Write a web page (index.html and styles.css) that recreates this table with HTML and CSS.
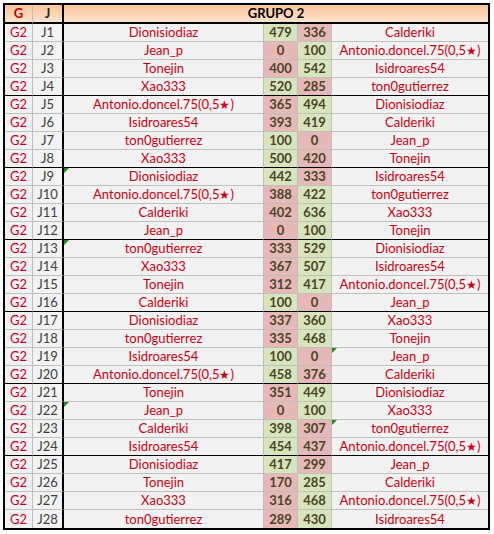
FILE: index.html
```html
<!DOCTYPE html>
<html>
<head>
<meta charset="utf-8">
<link rel="stylesheet" href="styles.css">
</head>
<body>
<table class="sheet">
<colgroup>
<col class="c-g"><col class="c-j"><col class="c-n1"><col class="c-s"><col class="c-s"><col class="c-n2">
</colgroup>
<thead>
<tr class="hdr">
<th class="g">G</th><th class="j">J</th><th class="title" colspan="4">GRUPO 2</th>
</tr>
</thead>
<tbody>
<tr><td class="g">G2</td><td class="j">J1</td><td class="n1">Dionisiodiaz</td><td class="s win">479</td><td class="s lose">336</td><td class="n2">Calderiki</td></tr>
<tr><td class="g">G2</td><td class="j">J2</td><td class="n1">Jean_p</td><td class="s lose">0</td><td class="s win">100</td><td class="n2">Antonio.doncel.75(0,5<span class="star">★</span>)</td></tr>
<tr><td class="g">G2</td><td class="j">J3</td><td class="n1">Tonejin</td><td class="s lose">400</td><td class="s win">542</td><td class="n2">Isidroares54</td></tr>
<tr class="sep"><td class="g">G2</td><td class="j">J4</td><td class="n1">Xao333</td><td class="s win">520</td><td class="s lose">285</td><td class="n2">ton0gutierrez</td></tr>
<tr><td class="g">G2</td><td class="j">J5</td><td class="n1">Antonio.doncel.75(0,5<span class="star">★</span>)</td><td class="s lose">365</td><td class="s win">494</td><td class="n2">Dionisiodiaz</td></tr>
<tr><td class="g">G2</td><td class="j">J6</td><td class="n1">Isidroares54</td><td class="s lose">393</td><td class="s win">419</td><td class="n2">Calderiki</td></tr>
<tr><td class="g">G2</td><td class="j">J7</td><td class="n1">ton0gutierrez</td><td class="s win">100</td><td class="s lose">0</td><td class="n2">Jean_p</td></tr>
<tr class="sep"><td class="g">G2</td><td class="j">J8</td><td class="n1">Xao333</td><td class="s win">500</td><td class="s lose">420</td><td class="n2">Tonejin</td></tr>
<tr><td class="g">G2</td><td class="j">J9</td><td class="n1 flag">Dionisiodiaz</td><td class="s win">442</td><td class="s lose">333</td><td class="n2">Isidroares54</td></tr>
<tr><td class="g">G2</td><td class="j">J10</td><td class="n1">Antonio.doncel.75(0,5<span class="star">★</span>)</td><td class="s lose">388</td><td class="s win">422</td><td class="n2">ton0gutierrez</td></tr>
<tr><td class="g">G2</td><td class="j">J11</td><td class="n1">Calderiki</td><td class="s lose">402</td><td class="s win">636</td><td class="n2">Xao333</td></tr>
<tr class="sep"><td class="g">G2</td><td class="j">J12</td><td class="n1">Jean_p</td><td class="s lose">0</td><td class="s win">100</td><td class="n2">Tonejin</td></tr>
<tr><td class="g">G2</td><td class="j">J13</td><td class="n1 flag">ton0gutierrez</td><td class="s lose">333</td><td class="s win">529</td><td class="n2">Dionisiodiaz</td></tr>
<tr><td class="g">G2</td><td class="j">J14</td><td class="n1">Xao333</td><td class="s lose">367</td><td class="s win">507</td><td class="n2">Isidroares54</td></tr>
<tr><td class="g">G2</td><td class="j">J15</td><td class="n1">Tonejin</td><td class="s lose">312</td><td class="s win">417</td><td class="n2">Antonio.doncel.75(0,5<span class="star">★</span>)</td></tr>
<tr class="sep"><td class="g">G2</td><td class="j">J16</td><td class="n1">Calderiki</td><td class="s win">100</td><td class="s lose">0</td><td class="n2">Jean_p</td></tr>
<tr><td class="g">G2</td><td class="j">J17</td><td class="n1">Dionisiodiaz</td><td class="s lose">337</td><td class="s win">360</td><td class="n2">Xao333</td></tr>
<tr><td class="g">G2</td><td class="j">J18</td><td class="n1">ton0gutierrez</td><td class="s lose">335</td><td class="s win">468</td><td class="n2">Tonejin</td></tr>
<tr><td class="g">G2</td><td class="j">J19</td><td class="n1">Isidroares54</td><td class="s win">100</td><td class="s lose">0</td><td class="n2 flag">Jean_p</td></tr>
<tr class="sep"><td class="g">G2</td><td class="j">J20</td><td class="n1">Antonio.doncel.75(0,5<span class="star">★</span>)</td><td class="s win">458</td><td class="s lose">376</td><td class="n2">Calderiki</td></tr>
<tr><td class="g">G2</td><td class="j">J21</td><td class="n1">Tonejin</td><td class="s lose">351</td><td class="s win">449</td><td class="n2">Dionisiodiaz</td></tr>
<tr><td class="g">G2</td><td class="j">J22</td><td class="n1 flag">Jean_p</td><td class="s lose">0</td><td class="s win">100</td><td class="n2">Xao333</td></tr>
<tr><td class="g">G2</td><td class="j">J23</td><td class="n1">Calderiki</td><td class="s win">398</td><td class="s lose">307</td><td class="n2 flag">ton0gutierrez</td></tr>
<tr class="sep"><td class="g">G2</td><td class="j">J24</td><td class="n1">Isidroares54</td><td class="s win">454</td><td class="s lose">437</td><td class="n2">Antonio.doncel.75(0,5<span class="star">★</span>)</td></tr>
<tr><td class="g">G2</td><td class="j">J25</td><td class="n1">Dionisiodiaz</td><td class="s win">417</td><td class="s lose">299</td><td class="n2">Jean_p</td></tr>
<tr><td class="g">G2</td><td class="j">J26</td><td class="n1">Tonejin</td><td class="s lose">170</td><td class="s win">285</td><td class="n2">Calderiki</td></tr>
<tr><td class="g">G2</td><td class="j">J27</td><td class="n1">Xao333</td><td class="s lose">316</td><td class="s win">468</td><td class="n2">Antonio.doncel.75(0,5<span class="star">★</span>)</td></tr>
<tr class="last"><td class="g">G2</td><td class="j">J28</td><td class="n1">ton0gutierrez</td><td class="s lose">289</td><td class="s win">430</td><td class="n2">Isidroares54</td></tr>
</tbody>
</table>
</body>
</html>
```

FILE: styles.css
```css
html, body {
  margin: 0;
  padding: 0;
  background: #ffffff;
}

.sheet {
  margin: 3px 0 0 3px;
  border: 2px solid #000;
  border-collapse: separate;
  border-spacing: 0;
  table-layout: fixed;
  width: 487px;
  box-sizing: border-box;
  font-family: Lato, "Liberation Sans", sans-serif;
  font-size: 13px;
  background: #f2f2f2;
}

.c-g { width: 28px; }
.c-j { width: 31px; }
.c-n1 { width: 200px; }
.c-s { width: 34px; }
.c-n2 { width: 156px; }

.sheet th,
.sheet td {
  box-sizing: border-box;
  height: 18px;
  padding: 0;
  text-align: center;
  vertical-align: middle;
  white-space: nowrap;
  overflow: hidden;
  line-height: 17px;
  border-right: 1px solid #bfbfbf;
  border-bottom: 1px solid #bfbfbf;
  position: relative;
}

.sheet td.j,
.sheet th.j {
  border-right: 2px solid #000;
}

.sheet td.n2,
.sheet th.title {
  border-right: none;
}

.hdr th {
  height: 18px;
  border-bottom: 2px solid #000;
  background: linear-gradient(to bottom, #f9c59a 0%, #fde3cd 100%);
  font-weight: 700;
  color: #000;
}

.hdr th.g { color: #c00000; }
.hdr th.j { color: #262626; }

.sep td { border-bottom-color: #000; }
.last td { border-bottom: none; }

td.g { color: #c8001e; }
td.j { color: #404040; }
td.n1, td.n2 { color: #c80012; }

.star { font-size: 12px; }

td.s {
  font-weight: 700;
  color: #494429;
}
td.win { background: #d8e4bc; }
td.lose { background: #e6b8b7; }

td.flag::before {
  content: "";
  position: absolute;
  left: 0;
  top: 0;
  border-style: solid;
  border-width: 5px 5px 0 0;
  border-color: #1e8a1e transparent transparent transparent;
}
```
